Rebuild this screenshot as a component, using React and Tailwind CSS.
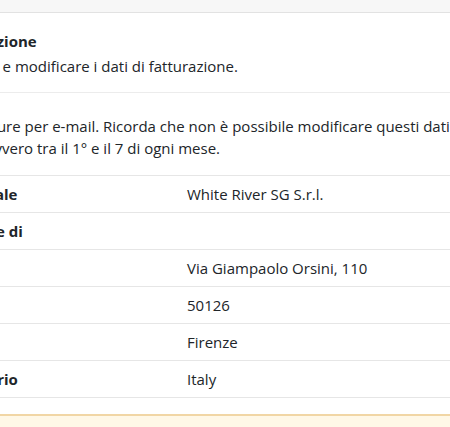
const rows = [
  { label: "Ragione sociale", value: "White River SG S.r.l.", bold: true },
  { label: "Indirizzo sede di", value: "", bold: true },
  { label: "Via", value: "Via Giampaolo Orsini, 110", sub: true },
  { label: "CAP", value: "50126", sub: true },
  { label: "Città", value: "Firenze", sub: true },
  { label: "Stato/territorio", value: "Italy", bold: true },
];

export default function App() {
  return (
    <div className="h-[427px] w-[450px] overflow-hidden bg-white text-[15px] leading-[21px] text-[#212529]" style={{ fontFamily: "'Open Sans', 'Noto Sans', sans-serif" }}>
      <div className="h-[13px] border-b border-[#e2e2e2] bg-[#f7f7f7]" />
      <div className="ml-[-110px] w-[760px]">
        <div className="border-b border-[#ececec] pb-[15px] pt-[18px]">
          <h2 className="font-bold">Dati di fatturazione</h2>
          <p className="mt-1">Puoi consultare e modificare i dati di fatturazione.</p>
        </div>
        <div className="pt-[22px]">
          <p className="leading-[22px]">
            Riceverai le fatture per e-mail. Ricorda che non è possibile modificare questi dati
            <br />
            in emissione, ovvero tra il 1° e il 7 di ogni mese.
          </p>
          <table className="mt-4 w-full border-collapse">
            <tbody>
              {rows.map((r) => (
                <tr key={r.label} className="border-t border-b border-[#e6e6e6]">
                  <td className={`h-[37px] w-[281px] py-0 pr-4 align-middle ${r.bold ? "font-bold" : ""} ${r.sub ? "pl-8" : "pl-3"}`}>{r.label}</td>
                  <td className="h-[37px] px-4 py-0 align-middle">{r.value}</td>
                </tr>
              ))}
            </tbody>
          </table>
          <div className="mt-4 h-[40px] border-t-2 border-[#f1d6a5] bg-[#fff8e7]" />
        </div>
      </div>
    </div>
  );
}
